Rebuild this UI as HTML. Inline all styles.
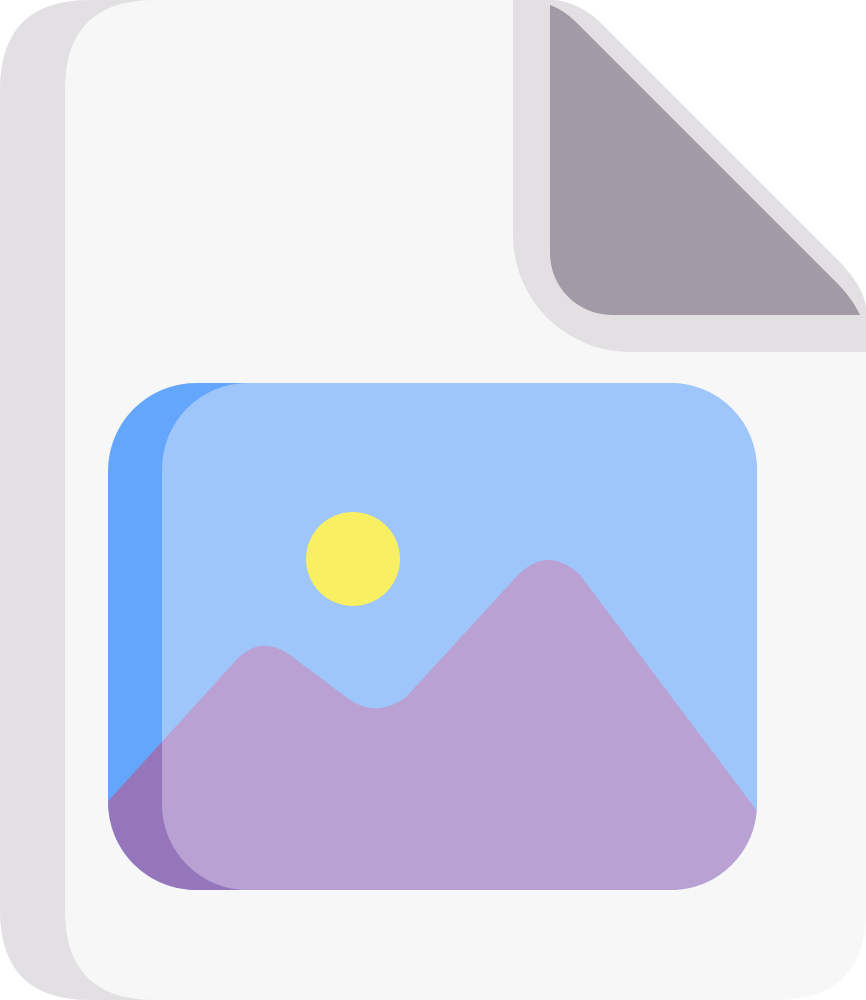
<!DOCTYPE html>
<html><head><meta charset="utf-8"><style>
html,body{margin:0;padding:0;background:#fff;}
svg{display:block;}
</style></head><body>
<svg width="866" height="1000" viewBox="0 0 866 1000" xmlns="http://www.w3.org/2000/svg">
<defs>
<clipPath id="full"><rect x="108" y="383" width="649" height="507" rx="88" ry="88"/></clipPath>
<clipPath id="light"><rect x="162" y="383" width="595" height="507" rx="86" ry="86"/></clipPath>
</defs>
<!-- back sheet -->
<path d="M90,0 H560 V1000 H90 Q0,1000 0,910 V90 Q0,0 90,0 Z" fill="#e2e0e3"/>
<!-- front sheet -->
<path d="M155,0 H560 L866,306 V910 Q866,1000 776,1000 H155 Q65,1000 65,910 V90 Q65,0 155,0 Z" fill="#f7f7f7"/>
<!-- fold outer -->
<path d="M513,0 H555 Q580,3 600,22 L840,262 Q866,290 866,310 V352 H630 A117 117 0 0 1 513 235 Z" fill="#e2e0e3"/>
<!-- fold inner -->
<path d="M550,5 Q564,10 578,24 L836,282 Q852,298 860,315 H612 A62 62 0 0 1 550 253 Z" fill="#a29ba6"/>
<!-- image -->
<rect x="108" y="383" width="649" height="507" rx="88" ry="88" fill="#64a6fb"/>
<g clip-path="url(#full)">
<path d="M100,810 L238,658 Q262,635 290,655 L350,700 Q378,718 406,697 L518,575 Q548,545 580,575 L770,830 V900 H100 Z" fill="#9676bb"/>
</g>
<rect x="162" y="383" width="595" height="507" rx="86" ry="86" fill="#9ec6fb"/>
<g clip-path="url(#light)">
<path d="M100,810 L238,658 Q262,635 290,655 L350,700 Q378,718 406,697 L518,575 Q548,545 580,575 L760,815 V900 H100 Z" fill="#b9a1d3"/>
</g>
<circle cx="353" cy="559" r="47" fill="#f9ef63"/>
</svg>
</body></html>
